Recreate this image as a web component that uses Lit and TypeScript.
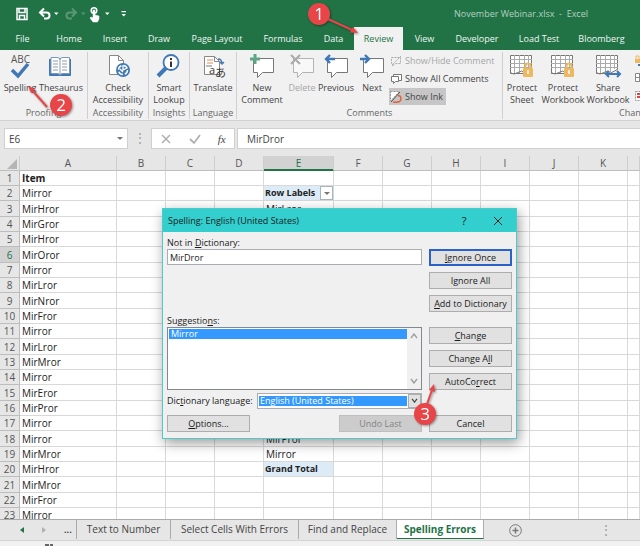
import { LitElement, html, svg, css } from "lit";
import { customElement } from "lit/decorators.js";
import { classMap } from "lit/directives/class-map.js";

const COLUMNS = ["A", "B", "C", "D", "E", "F", "G", "H", "I", "J", "K", ""];

const ITEMS = [
  "Item", "Mirror", "MirHror", "MirGror", "MirHror", "MirOror", "Mirror", "MirLror",
  "MirNror", "MirFror", "Mirror", "MirLror", "MirMror", "Mirror", "MirEror", "MirPror",
  "Mirror", "Mirror", "MirMror", "MirHror", "MirMror", "MirFror", "Mirror",
];

const PIVOT: Record<number, string> = {
  2: "Row Labels", 3: "MirLror", 18: "MirPror", 19: "Mirror", 20: "Grand Total",
};

const TABS = [
  "File", "Home", "Insert", "Draw", "Page Layout", "Formulas", "Data",
  "Review", "View", "Developer", "Load Test", "Bloomberg",
];

const bubble = svg`<path d="M4.5 4.5h20v14h-11l-5 5v-5h-4z" fill="#fff" stroke="#777"/>`;
const grid = svg`
  <path d="M1.5 1.5h21v14l-8 4h-13z" fill="#fff" stroke="#777"/>
  <path d="M1 5.5h22M1 9.5h22M1 13.5h22M5.5 1v18M10.5 1v18M15.5 1v17M19.5 1v14" stroke="#aaa" fill="none"/>
  <path d="M1 18.500q4 3 8 0t6 0" stroke="#777" fill="none"/>`;
const lock = svg`
  <path d="M16.500 14v-2a2.500 2.500 0 0 1 5 0v2" fill="none" stroke="#ecb860" stroke-width="2"/>
  <rect x="14" y="14" width="10" height="9" rx="1" fill="#ecb860"/>
  <path d="M19 16v4" stroke="#fff" stroke-width="1.500"/>`;

const ICONS = {
  spelling: svg`<path d="M5 16l6 6L21 10" fill="none" stroke="#3f78b5" stroke-width="3.500"/>`,
  book: svg`
    <path d="M1.500 5v16.500h21V5" fill="#3f78b5" stroke="#3f78b5"/>
    <path d="M3 3.500h6q3 0 3 2 0-2 3-2h6.500v16H15q-3 0-3 2 0-2-3-2H3z" fill="#fff" stroke="#7c97b5"/>
    <path d="M12 5v15M5 7h5M5 10h5M5 13h5M5 16h5M14 7h5M14 10h5M14 13h5M14 16h5" stroke="#8a9cb0"/>`,
  access: svg`
    <path d="M4.500 1.500h9l5 5v14h-14z" fill="#fff" stroke="#888"/><path d="M13.500 1.500v5h5" fill="none" stroke="#888"/>
    <circle cx="18" cy="16" r="7" fill="#3f78b5"/>
    <circle cx="18" cy="16" r="4.500" fill="none" stroke="#fff" stroke-width="1.500" stroke-dasharray="5 2"/>
    <path d="M18 11v5l4-2M15 15l3 3" stroke="#fff" stroke-width="1.300" fill="none"/>`,
  lookup: svg`
    <path d="M10 14l-8 8" stroke="#3f78b5" stroke-width="4"/>
    <circle cx="15" cy="8.500" r="7.500" fill="#fff" stroke="#3f78b5" stroke-width="1.800"/>
    <path d="M15 7.500v5.500M15 4v2" stroke="#333" stroke-width="2"/>`,
  translate: svg`
    <path d="M4.500 2.500h10l5 5v13h-15z" fill="#fff" stroke="#888"/><path d="M14.500 2.500v5h5" fill="none" stroke="#888"/>
    <path d="M7 6h6M7 9h6" stroke="#e08a5a"/><path d="M6 12h6" stroke="#777"/>
    <path d="M18 5q4 0 4 5M20 8l2 2 2-2" fill="none" stroke="#3f78b5" stroke-width="1.300"/>
    <text x="9" y="20" font-size="11" fill="#333">a</text>
    <text class="kana" x="15" y="23" font-size="11" fill="#333">あ</text>`,
  comment: svg`${bubble}<path d="M6 0v10M1 5h10" stroke="#5fa586" stroke-width="3"/>`,
  remove: svg`<g opacity=".5">${bubble}</g><path d="M2 1l9 9M11 1l-9 9" stroke="#aaa" stroke-width="2"/>`,
  previous: svg`${bubble}<path d="M12 5H3M7 1L3 5l4 4" fill="none" stroke="#3f78b5" stroke-width="2.400"/>`,
  next: svg`${bubble}<path d="M1 5h9M6 1l4 4-4 4" fill="none" stroke="#3f78b5" stroke-width="2.400"/>`,
  protect: svg`${grid}${lock}`,
  share: svg`${grid}<path d="M12 20h12M14 17l-3 3 3 3M22 17l3 3-3 3" fill="none" stroke="#3f78b5" stroke-width="2"/>`,
};

type IconName = keyof typeof ICONS;

@customElement("ribbon-button")
class RibbonButton extends LitElement {
  static properties = { icon: {}, lines: { type: Array }, disabled: { type: Boolean } };
  declare icon: IconName;
  declare lines: string[];
  declare disabled: boolean;

  static styles = css`
    :host { display: flex; justify-content: center; min-width: 0; }
    button {
      all: unset; display: flex; flex-direction: column; align-items: center;
      font: 9px/12px "Open Sans", sans-serif; color: #444; white-space: nowrap;
    }
    button:disabled { color: #a6a6a6; }
    .icon { width: 26px; height: 25px; margin: 2px 0 3px; display: block; overflow: visible; }
    text { font-family: "Open Sans", sans-serif; }
    .kana { font-family: "Noto Sans CJK JP", sans-serif; }
  `;

  render() {
    return html`<button ?disabled=${this.disabled}>
      <svg class="icon" viewBox="0 0 26 25" aria-hidden="true">
        ${this.icon === "spelling" ? svg`<text x="4" y="9" font-size="10" fill="#555">ABC</text>` : ""}
        ${ICONS[this.icon]}
      </svg>
      ${this.lines.map((l) => html`<span>${l}</span>`)}
    </button>`;
  }
}

@customElement("spelling-dialog")
class SpellingDialog extends LitElement {
  static styles = css`
    :host {
      display: block; box-sizing: border-box; width: 355px; background: #f0f0f0;
      border: 1px solid #4fcaca; box-shadow: 2px 4px 12px rgb(0 0 0 / 40%);
      font: 9px/13px "Open Sans", sans-serif; color: #1a1a1a;
    }
    * { box-sizing: border-box; }
    header { display: flex; align-items: center; height: 23px; padding: 0 12px 0 5px; background: #33cece; }
    h2 { flex: 1; margin: 0; font-size: 9px; font-weight: 400; }
    header button { all: unset; width: 12px; margin-left: 22px; text-align: center; font-size: 11px; }
    header svg { display: block; width: 10px; height: 10px; margin: auto; }
    .body { padding: 4px 4px 6px; display: grid; grid-template-columns: 255px 83px; column-gap: 7px; }
    .field { display: flex; flex-direction: column; }
    .commands { display: flex; flex-direction: column; gap: 6px; padding: 13px 0 2px; }
    .command {
      height: 17px; width: 83px; padding: 0; border: 1px solid #adadad; background: #e1e1e1;
      font: inherit; line-height: 14px; color: inherit; white-space: nowrap;
    }
    .command.primary { border: 2px solid #2a62c8; line-height: 12px; }
    .command:disabled { background: #cccccc; border-color: #bfbfbf; color: #838383; }
    u { text-underline-offset: 1px; }
    input {
      height: 16px; padding: 0 2px; border: 1px solid #abadb3; background: #fff;
      font: inherit; color: inherit; border-radius: 0;
    }
    .list { display: flex; height: 63px; border: 1px solid #828790; background: #fff; }
    ul { flex: 1; margin: 1px 0 0 1px; padding: 0; list-style: none; }
    li { height: 10px; line-height: 10px; padding-left: 2px; background: #3399ff; color: #fff; }
    .scroll { width: 14px; background: #f0f0f0; display: flex; flex-direction: column; justify-content: space-between; padding: 5px 3px; }
    .scroll svg { width: 8px; height: 6px; }
    .language { display: flex; align-items: center; height: 17px; }
    .language label { flex: 1; }
    .combo { display: flex; width: 165px; height: 16px; border: 1px solid #abadb3; background: #fff; padding: 0 0 0 1px; }
    select {
      appearance: none; flex: 1; min-width: 0; height: 10px; margin: 2px 0; padding: 0 1px; border: 0; border-radius: 0;
      background: #3399ff; color: #fff; font: 9px/10px "Open Sans", sans-serif;
    }
    .drop { width: 13px; margin-left: 1px; border: 1px solid #adadad; background: #e1e1e1; display: grid; place-items: center; }
    .drop svg { width: 7px; height: 5px; }
    .footer { grid-column: 1 / -1; display: flex; justify-content: space-between; padding-top: 6px; }
    .footer .undo { margin-left: auto; margin-right: 7px; }
  `;

  render() {
    const chevron = (d: string, color: string) =>
      html`<svg viewBox="0 0 8 6" aria-hidden="true"><path d=${d} fill="none" stroke=${color} stroke-width="1.400" /></svg>`;
    return html`
      <header>
        <h2>Spelling: English (United States)</h2>
        <button aria-label="Help">?</button>
        <button aria-label="Close"><svg viewBox="0 0 10 10"><path d="M1 1l8 8M9 1l-8 8" stroke="#222" /></svg></button>
      </header>
      <div class="body">
        <div class="field">
          <label for="word">Not in <u>D</u>ictionary:</label>
          <input id="word" value="MirDror" />
        </div>
        <div class="commands">
          <button class="command primary"><u>I</u>gnore Once</button>
          <button class="command">I<u>g</u>nore All</button>
          <button class="command"><u>A</u>dd to Dictionary</button>
        </div>
        <div class="field">
          <span id="suggest">Suggestio<u>n</u>s:</span>
          <div class="list">
            <ul role="listbox" aria-labelledby="suggest"><li role="option" aria-selected="true">Mirror</li></ul>
            <div class="scroll">${chevron("M1 5l3-4 3 4", "#a0a0a0")}${chevron("M1 1l3 4 3-4", "#a0a0a0")}</div>
          </div>
        </div>
        <div class="commands">
          <button class="command"><u>C</u>hange</button>
          <button class="command">Change A<u>l</u>l</button>
          <button class="command">AutoCo<u>r</u>rect</button>
        </div>
        <div class="language">
          <label for="lang">Dic<u>t</u>ionary language:</label>
          <div class="combo">
            <select id="lang"><option>English (United States)</option></select>
            <span class="drop">${chevron("M1 1l3 4 3-4", "#444")}</span>
          </div>
        </div>
        <div class="footer">
          <button class="command"><u>O</u>ptions...</button>
          <button class="command undo" disabled>Undo Last</button>
          <button class="command">Cancel</button>
        </div>
      </div>`;
  }
}

@customElement("app-root")
class AppRoot extends LitElement {
  static styles = css`
    :host {
      display: flex; flex-direction: column; position: relative; height: 100vh; overflow: hidden;
      font: 9px/12px "Open Sans", sans-serif; color: #444; background: #f1f1f1;
    }
    * { box-sizing: border-box; }
    .title { flex: none; display: flex; align-items: center; height: 27px; padding: 0 52px 0 14px; background: #217346; color: #b4d0c0; }
    .title svg { width: 120px; height: 20px; }
    .title span { margin-left: auto; white-space: pre; }
    nav {
      flex: none; display: grid; height: 23px; background: #217346;
      grid-template-columns: 45px 48px 44px 44px 72px 60px 41px 49px 43px 62px 62px 63px;
    }
    nav button { all: unset; text-align: center; line-height: 23px; color: #f0f6f2; white-space: nowrap; }
    nav button.active { background: #f1f1f1; color: #217346; }
    .ribbon { flex: none; display: flex; height: 71px; padding: 2px 0 0; border-bottom: 1px solid #d2d2d2; overflow: hidden; }
    .group { flex: none; display: flex; flex-direction: column; justify-content: space-between; border-right: 1px solid #d0d0d0; height: 67px; }
    .group > footer { text-align: center; color: #666; line-height: 12px; }
    .tools { display: grid; }
    .proofing { width: 88px; } .proofing .tools { grid-template-columns: 40px 42px; }
    .accessibility { width: 61px; }
    .insights { width: 41px; }
    .lang { width: 47px; }
    .comments { width: 266px; } .comments .tools { grid-template-columns: 50px 30px 38px 34px 1fr; }
    .changes { width: 268px; border: 0; } .changes .tools { grid-template-columns: 38px 44px 46px 1fr; }
    .stack { display: flex; flex-direction: column; align-items: flex-start; gap: 1px; }
    .stack button { all: unset; display: flex; align-items: center; gap: 3px; height: 17px; padding: 0 3px 0 1px; white-space: nowrap; }
    .stack button:disabled { color: #a6a6a6; }
    .stack button.on { background: #c6c6c6; }
    .stack svg { width: 12px; height: 12px; }
    .more { display: flex; flex-direction: column; gap: 5px; padding: 2px 0 0 3px; }
    .more svg { width: 13px; height: 13px; }

    .formula { flex: none; display: flex; height: 35px; padding: 7px 0 7px 4px; background: #e6e6e6; font-size: 10px; }
    .formula > div { background: #fff; border: 1px solid #d0d0d0; display: flex; align-items: center; }
    .formula input { all: unset; flex: 1; min-width: 0; padding-left: 4px; }
    .name { width: 124px; padding-right: 4px; }
    .arrow { width: 0; border: 3px solid transparent; border-top-color: #777; border-bottom: 0; }
    .dots { width: 23px; text-align: center; font-size: 12px; line-height: 20px; color: #999; }
    .fx { width: 84px; margin-right: 2px; justify-content: space-around; }
    .fx svg { width: 12px; height: 12px; }
    .fx i { font: italic 11px/12px "Liberation Serif", serif; }
    .formula .value { flex: 1; border-right: 0; padding-left: 5px; }

    .sheet { flex: 1; min-height: 0; overflow: hidden; background: #fff; }
    table { table-layout: fixed; width: 100%; border-spacing: 0; font-size: 10px; line-height: 14px; color: #222; }
    tr { height: 15px; }
    tbody tr:nth-child(3n) { height: 16px; }
    th, td { padding: 0; border: 0 solid #d9d9d9; border-width: 0 1px 1px 0; white-space: nowrap; overflow: hidden; text-align: left; }
    td { padding-left: 2px; }
    th { background: #e6e6e6; border-color: #bdbdbd; font-weight: 400; text-align: center; color: #555; }
    thead th { border-right-color: #cdcdcd; }
    th.on { background: #d2d2d2; color: #217346; }
    thead th.on { border-bottom-color: #217346; box-shadow: inset 0 -1px #217346; }
    td.bold { font-weight: 700; }
    td.pivot { background: #ddebf7; font-size: 9px; padding-left: 1px; }
    .rowno { width: 20px; } .wide { width: 97px; } .cell { width: 49px; } .pivot-col { width: 70px; }
    .corner { display: block; margin: 3px 2px 1px auto; width: 0; border: 5px solid transparent; border-right-color: #b5b5b5; border-bottom-color: #b5b5b5; }
    .pivot-head { display: flex; align-items: center; justify-content: space-between; }
    .pivot-head button { width: 13px; height: 14px; padding: 0; border: 1px solid #a8b4c2; background: #fff; display: grid; place-items: center; }

    .sheets { flex: none; display: flex; height: 22px; border-top: 1px solid #ababab; border-bottom: 1px solid #d4d4d4; background: #e6e6e6; }
    .sheets button { all: unset; box-sizing: border-box; text-align: center; white-space: nowrap; }
    .sheets .tab { font-size: 10px; line-height: 19px; height: 19px; border-right: 1px solid #ababab; }
    .sheets .active { background: #fff; color: #217346; font-weight: 700; border-bottom: 1px solid #217346; }
    .arrows { display: flex; align-items: center; width: 77px; padding-left: 20px; gap: 18px; border-right: 1px solid #ababab; height: 19px; }
    .arrows svg { width: 4px; height: 6px; }
    .sheets .w94 { width: 94px; } .sheets .w128 { width: 128px; } .sheets .w98 { width: 98px; } .sheets .w87 { width: 87px; }
    .sheets .add { margin-left: 25px; display: flex; align-items: center; }
    .add svg { width: 13px; height: 13px; }
    .grip { margin-left: auto; padding-right: 28px; font-size: 12px; line-height: 19px; color: #999; }
    .status { flex: none; height: 5px; padding-left: 44px; }
    .status svg { display: block; width: 12px; height: 5px; }

    spelling-dialog { position: absolute; left: 162px; top: 208px; }
    .note { position: absolute; overflow: visible; filter: drop-shadow(1px 1px 1px rgb(0 0 0 / 40%)); fill: #e84548; pointer-events: none; }
    .note text { fill: #fff; font-size: 17px; text-anchor: middle; }
    .note line { stroke: #e84548; stroke-width: 2; }
    .one { left: 308px; top: 3px; width: 52px; height: 32px; }
    .two { left: 27px; top: 84px; width: 46px; height: 34px; }
    .three { left: 413px; top: 382px; width: 24px; height: 44px; }
  `;

  private group(name: string, label: string, content: unknown) {
    return html`<section class="group ${name}"><div class="tools">${content}</div><footer>${label}</footer></section>`;
  }

  private tool(iconName: IconName, ...lines: string[]) {
    return html`<ribbon-button .icon=${iconName} .lines=${lines} ?disabled=${iconName === "remove"}></ribbon-button>`;
  }

  private cell(row: number, col: string) {
    if (col === "A") return html`<td class=${classMap({ bold: row === 1 })}>${ITEMS[row - 1]}</td>`;
    if (col !== "E" || !PIVOT[row]) return html`<td></td>`;
    const strong = row === 2 || row === 20;
    return html`<td class=${classMap({ bold: strong, pivot: strong })}>
      ${row === 2
        ? html`<div class="pivot-head">${PIVOT[row]}<button aria-label="Filter"><span class="arrow"></span></button></div>`
        : PIVOT[row]}
    </td>`;
  }

  render() {
    const widths = ["wide", "cell", "cell", "cell", "pivot-col", "cell", "cell", "cell", "cell", "cell", "cell", ""];
    return html`
      <div class="title">
        <svg viewBox="0 0 120 20" fill="none" stroke="#fff" aria-hidden="true">
          <path d="M3 4.500h10v11H3zM5 4v4.500h6V4M5.500 15v-3.500h5V15" stroke-width="1.500" />
          <path d="M26 8.500h6.500a3 3 0 0 1 0 6H30M30 4.500l-4 4 4 4" stroke-width="2" />
          <path d="M40 8.500h4.500l-2.250 2.500z" fill="#fff" stroke="none" />
          <g opacity=".25"><path d="M62 8.500h-6.500a3 3 0 0 0 0 6H58M58 4.500l4 4-4 4" stroke-width="2" />
          <path d="M67 8.500h4.500l-2.250 2.500z" fill="#fff" stroke="none" /></g>
          <circle cx="80" cy="6.500" r="2.800" stroke-width="1.500" />
          <path d="M79 6h2v5l4 1v3l-1.500 3h-4.500l-3-4 1-1 2 1z" fill="#fff" stroke-width=".5" />
          <path d="M91 8.500h4.500l-2.250 2.500zM107.500 10h4.500l-2.250 2.500zM107.500 7h4.500v1.300h-4.500z" fill="#fff" stroke="none" />
        </svg>
        <span>November Webinar.xlsx  -  Excel</span>
      </div>
      <nav>${TABS.map((t) => html`<button class=${classMap({ active: t === "Review" })}>${t}</button>`)}</nav>

      <div class="ribbon">
        ${this.group("proofing", "Proofing", [this.tool("spelling", "Spelling"), this.tool("book", "Thesaurus")])}
        ${this.group("accessibility", "Accessibility", this.tool("access", "Check", "Accessibility"))}
        ${this.group("insights", "Insights", this.tool("lookup", "Smart", "Lookup"))}
        ${this.group("lang", "Language", this.tool("translate", "Translate"))}
        ${this.group("comments", "Comments", html`
          ${this.tool("comment", "New", "Comment")}${this.tool("remove", "Delete")}
          ${this.tool("previous", "Previous")}${this.tool("next", "Next")}
          <div class="stack">
            <button disabled><svg viewBox="0 0 12 12" fill="none" stroke="#aaa"><path d="M1.500 2.500h9v6h-5l-3 2.500V8.500h-1zM11 1L2 10" stroke-dasharray="2 1" /></svg>Show/Hide Comment</button>
            <button><svg viewBox="0 0 12 12" fill="#fff" stroke="#777"><path d="M3.500 1.500h8v6h-8z" /><path d="M1.500 3.500h7v5h-3l-2 2v-2h-2z" /></svg>Show All Comments</button>
            <button class="on"><svg viewBox="0 0 12 12" fill="none"><path d="M.5.500h9L.5 10z" fill="#fff" stroke="#999" stroke-dasharray="2 1" /><path d="M1 11L10 1" stroke="#555" /><path d="M3 11q8 1 8-3T8 5" stroke="#e2613a" stroke-width="1.500" /></svg>Show Ink</button>
          </div>`)}
        ${this.group("changes", "Changes", html`
          ${this.tool("protect", "Protect", "Sheet")}${this.tool("protect", "Protect", "Workbook")}
          ${this.tool("share", "Share", "Workbook")}
          <div class="more">
            <svg viewBox="0 0 13 13"><path d="M1 5h5v4H1z" fill="#ecb860" /><path d="M2 5V2h3v3" fill="none" stroke="#ecb860" /><path d="M4 11h8M9 8l3 3" stroke="#3f78b5" stroke-width="2" /></svg>
            <svg viewBox="0 0 13 13"><path d="M1.500 1.500h11v8h-11zM1 5.500h12M5.500 1v8" fill="#fff" stroke="#888" /><path d="M6 11h7" stroke="#3f78b5" stroke-width="2" /></svg>
            <svg viewBox="0 0 13 13"><path d="M1.500 1.500h11v9h-11z" fill="#fff" stroke="#999" stroke-dasharray="2 1" /><path d="M3 4h3M3 7h3" stroke="#d44" stroke-width="2" /></svg>
          </div>`)}
      </div>

      <div class="formula">
        <div class="name"><input aria-label="Name box" value="E6" /><span class="arrow"></span></div>
        <span class="dots">⋮</span>
        <div class="fx">
          <svg viewBox="0 0 12 12"><path d="M2 2l8 8M10 2l-8 8" stroke="#b0b0b0" stroke-width="1.500" /></svg>
          <svg viewBox="0 0 12 12"><path d="M1 6l4 4 6-8" fill="none" stroke="#b0b0b0" stroke-width="1.800" /></svg>
          <i>fx</i>
        </div>
        <div class="value"><input aria-label="Formula" value="MirDror" /></div>
      </div>

      <div class="sheet">
        <table>
          <colgroup><col class="rowno" />${widths.map((w) => html`<col class=${w} />`)}</colgroup>
          <thead><tr><th><span class="corner"></span></th>${COLUMNS.map((c) => html`<th class=${classMap({ on: c === "E" })}>${c}</th>`)}</tr></thead>
          <tbody>
            ${ITEMS.map((_, i) => html`<tr>
              <th class=${classMap({ on: i === 5 })}>${i + 1}</th>
              ${COLUMNS.map((c) => this.cell(i + 1, c))}
            </tr>`)}
          </tbody>
        </table>
      </div>

      <div class="sheets">
        <div class="arrows">
          <svg viewBox="0 0 4 6"><path d="M4 0v6L0 3z" fill="#217346" /></svg>
          <svg viewBox="0 0 4 6"><path d="M0 0v6l4-3z" fill="#b0b0b0" /></svg>
          <b>...</b>
        </div>
        <button class="tab w94">Text to Number</button>
        <button class="tab w128">Select Cells With Errors</button>
        <button class="tab w98">Find and Replace</button>
        <button class="tab active w87">Spelling Errors</button>
        <button class="add" aria-label="New sheet"><svg viewBox="0 0 13 13" fill="none" stroke="#777"><circle cx="6.500" cy="6.500" r="5.800" /><path d="M6.500 3.500v6M3.500 6.500h6" stroke-width="1.500" /></svg></button>
        <span class="grip">⋮</span>
      </div>
      <div class="status"><svg viewBox="0 0 12 5"><path d="M1 3h4v2H1zM6 3h3v2H6z" fill="#666" /></svg></div>

      <spelling-dialog></spelling-dialog>

      <svg class="note one" viewBox="0 0 52 32"><line x1="20" y1="16" x2="44" y2="27" /><path d="M50 30l-8-.5 3-5.500z" /><circle cx="11" cy="11" r="11" /><text x="11" y="17">1</text></svg>
      <svg class="note two" viewBox="0 0 46 34"><line x1="20" y1="23" x2="5" y2="6" /><path d="M1 2l7 3-4 4z" /><circle cx="34" cy="21" r="11" /><text x="34" y="27">2</text></svg>
      <svg class="note three" viewBox="0 0 24 44"><line x1="14" y1="22" x2="19" y2="8" /><path d="M21 2l1 8-6-2z" /><circle cx="12" cy="32" r="11" /><text x="12" y="38">3</text></svg>
    `;
  }
}
